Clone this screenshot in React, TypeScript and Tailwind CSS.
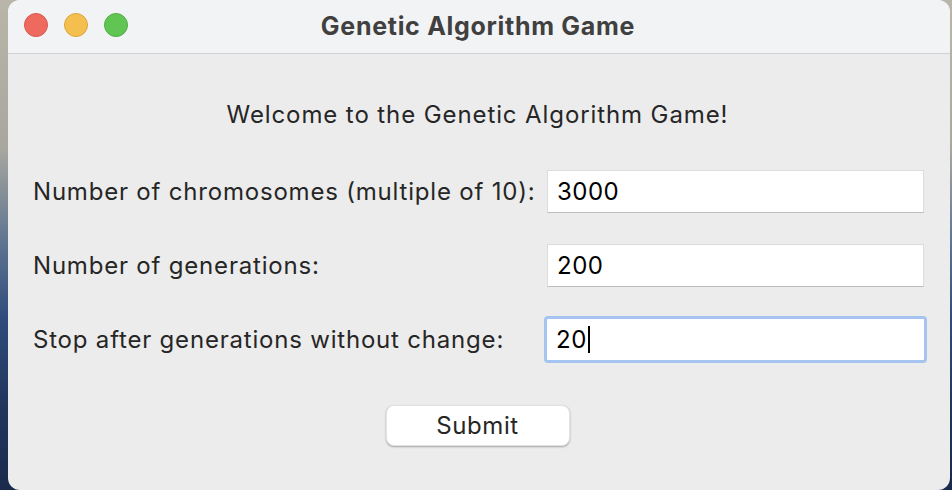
import React from "react";

const font = { fontFamily: '"Inter", "Liberation Sans", sans-serif' };

function Field({ value, focused }: { value: string; focused?: boolean }) {
  if (focused) {
    return (
      <div className="w-[383px] h-[47px] -mr-[3px] rounded-[4px] border-[3px] border-[#a5c4f0] bg-white flex items-center pl-[9px]">
        <span className="text-[24px] tracking-[0.5px] text-black leading-none">{value}</span>
        <span className="w-[2px] h-[27px] bg-black ml-[1px]" />
      </div>
    );
  }
  return (
    <div className="w-[377px] h-[43px] bg-white border border-[#dcdcdc] border-b-[#bdbdbd] flex items-center pl-[9px]">
      <span className="text-[24px] tracking-[0.5px] text-black leading-none">{value}</span>
    </div>
  );
}

export default function App() {
  return (
    <div
      className="w-[952px] h-[490px] flex overflow-hidden bg-[linear-gradient(180deg,#b9b5a8_0%,#a9a89f_30%,#5d7390_50%,#2f4c7c_65%,#22365e_82%,#1a2a4c_100%)]"
      style={font}
    >
      <div className="ml-[8px] mr-[2px] flex-1 h-[490px] rounded-[12px] overflow-hidden bg-[#ececec] flex flex-col">
        <div className="h-[54px] shrink-0 bg-[#f2f3f5] border-b border-[#d2d2d2] relative flex items-center justify-center pr-[2px]">
          <div className="absolute left-[16px] top-[13px] flex gap-[16px]">
            <span className="w-[24px] h-[24px] rounded-full bg-[#ee6a5f] border border-[#d9574d]" />
            <span className="w-[24px] h-[24px] rounded-full bg-[#f5bf4f] border border-[#dca53a]" />
            <span className="w-[24px] h-[24px] rounded-full bg-[#61c554] border border-[#4eae43]" />
          </div>
          <span className="text-[25px] font-bold text-[#404040] tracking-[0.7px]">Genetic Algorithm Game</span>
        </div>
        <div className="flex flex-col pt-[47px] pl-[25px] pr-[26px]">
          <div className="h-[28px] flex items-center justify-center text-[24px] tracking-[0.9px] text-[#262626] pr-[2px]">
            Welcome to the Genetic Algorithm Game!
          </div>
          <div className="mt-[41px] flex flex-col gap-[31px]">
            <div className="flex items-center justify-between h-[43px]">
              <span className="text-[24px] tracking-[0.8px] text-[#262626]">Number of chromosomes (multiple of 10):</span>
              <Field value="3000" />
            </div>
            <div className="flex items-center justify-between h-[43px]">
              <span className="text-[24px] tracking-[0.8px] text-[#262626]">Number of generations:</span>
              <Field value="200" />
            </div>
            <div className="flex items-center justify-between h-[43px]">
              <span className="text-[24px] tracking-[0.8px] text-[#262626]">Stop after generations without change:</span>
              <Field value="20" focused />
            </div>
          </div>
          <div className="mt-[44px] flex justify-center pr-[2px]">
            <button className="w-[184px] h-[41px] rounded-[8px] bg-white shadow-[0_1px_2px_rgba(0,0,0,0.3)] border border-[#e2e2e2] text-[24px] tracking-[0.6px] text-[#262626] flex items-center justify-center">
              Submit
            </button>
          </div>
        </div>
      </div>
    </div>
  );
}
